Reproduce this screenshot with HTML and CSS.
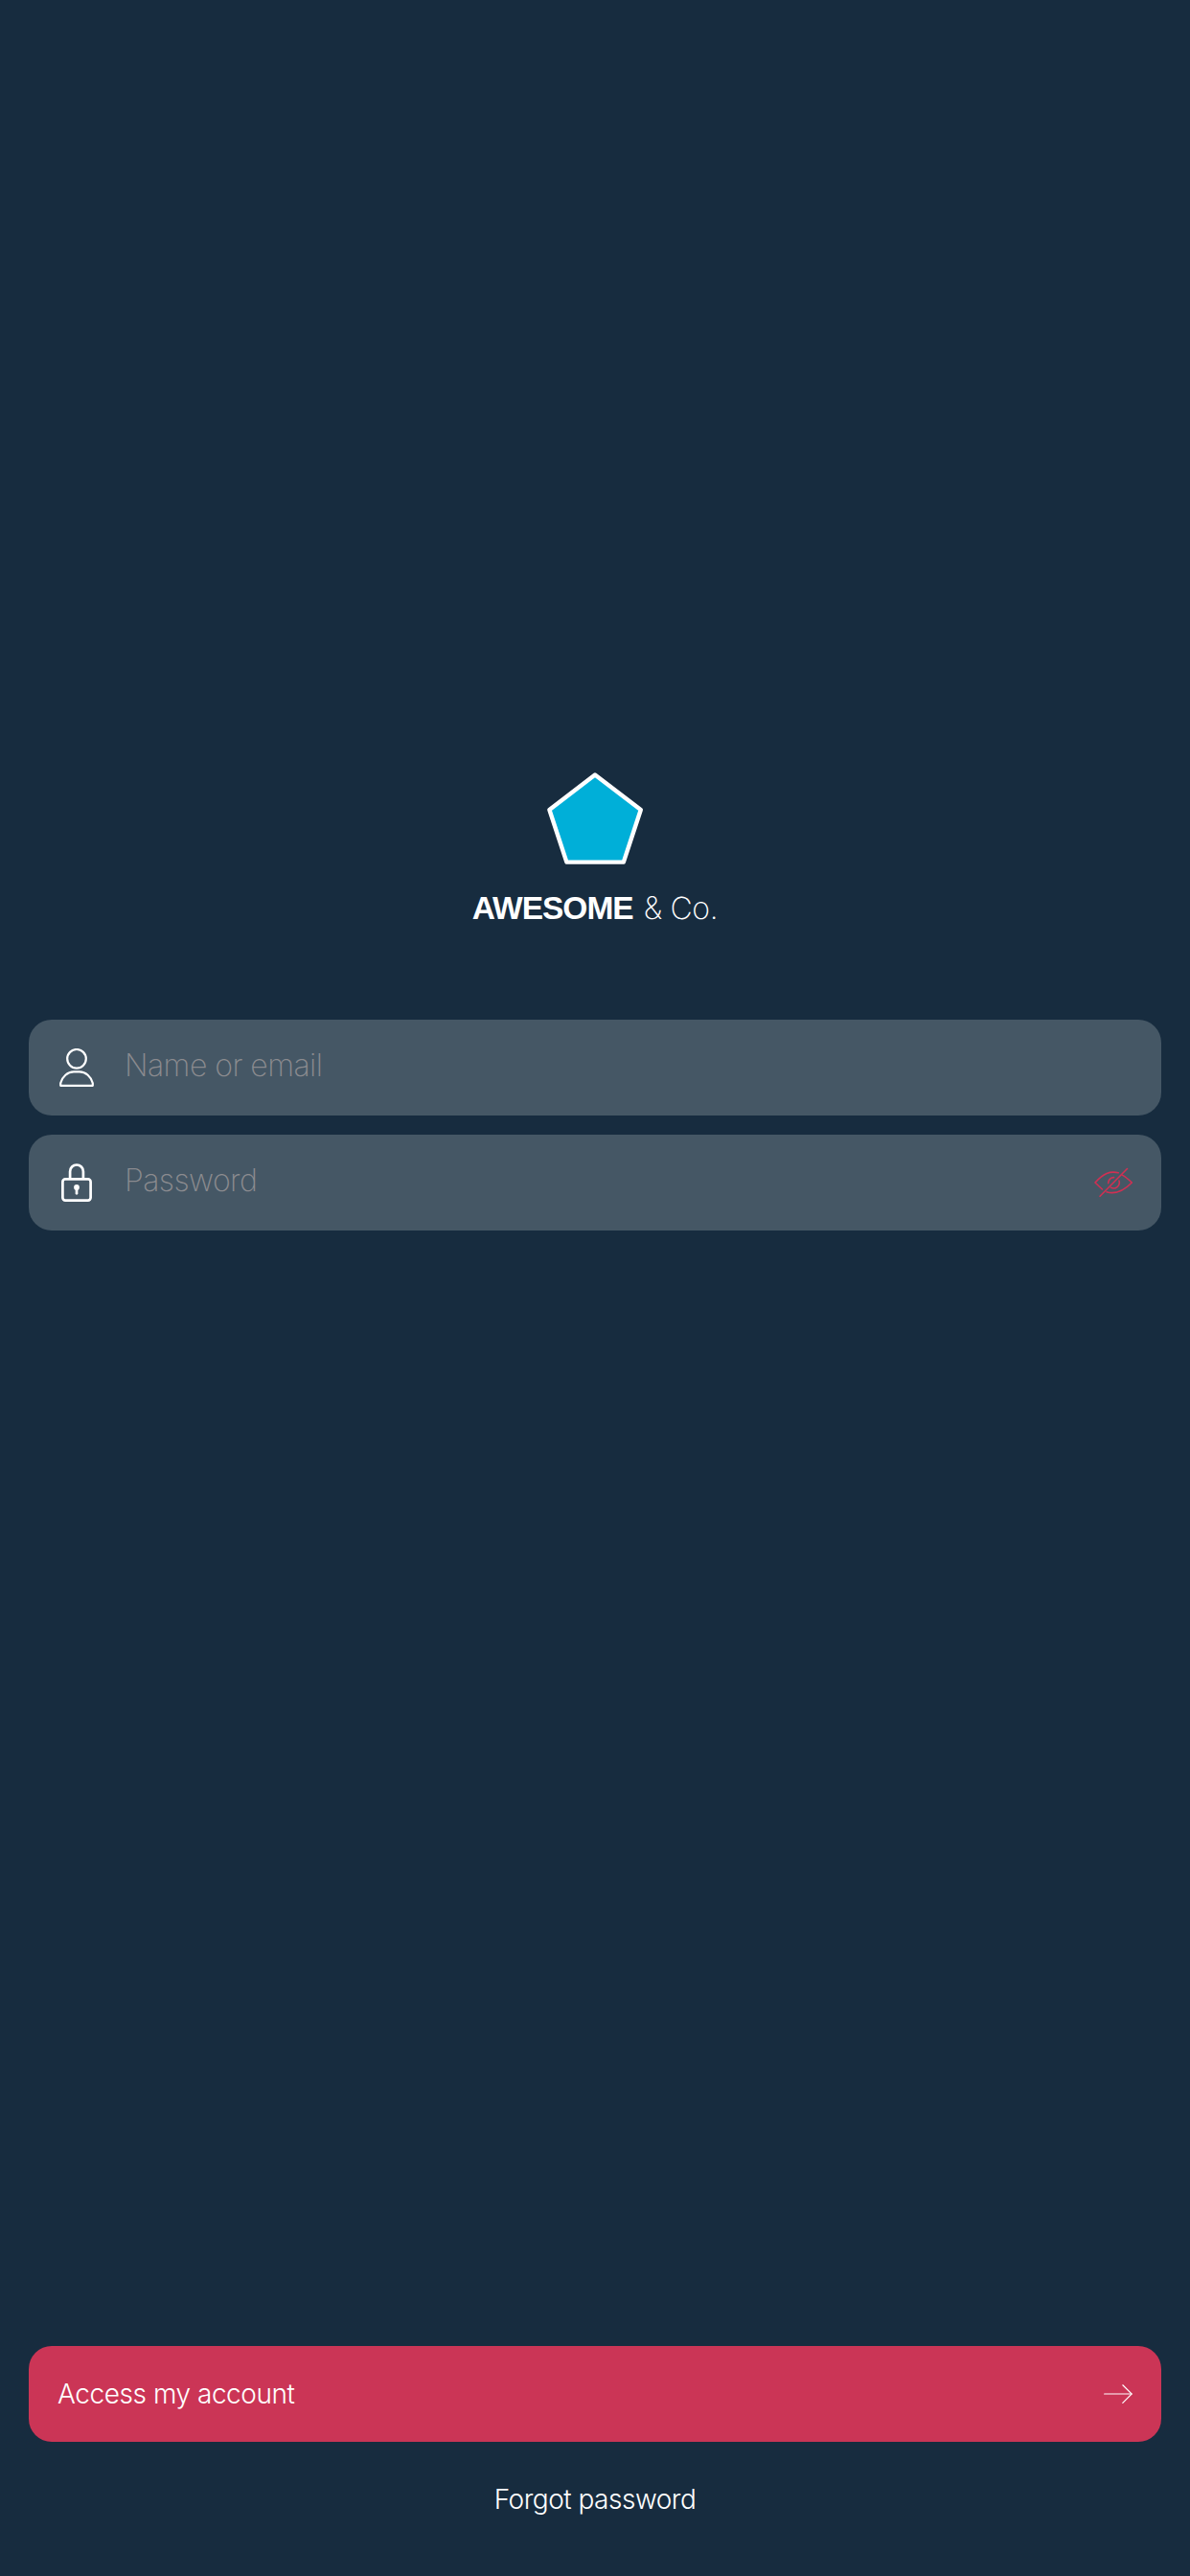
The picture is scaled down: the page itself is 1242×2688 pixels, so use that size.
FILE: index.html
```html
<!DOCTYPE html>
<html lang="en">
<head>
<meta charset="utf-8">
<title>Awesome &amp; Co.</title>
<link rel="stylesheet" href="styles.css">
</head>
<body>
<main class="screen">
  <header class="brand">
    <svg class="brand-mark" viewBox="0 0 104 102" fill="#00afd8" stroke="#fff" stroke-width="4.4" stroke-linejoin="round">
      <path d="M52 8.5 99.8 45 81.8 99.6H22.4L4.4 45Z"/>
    </svg>
    <h1 class="brand-name"><span class="brand-bold">AWESOME</span><span class="brand-light">&amp; Co.</span></h1>
  </header>
  <form class="login">
    <label class="field">
      <svg class="icon" viewBox="0 0 40 40" fill="none" stroke="#fff" stroke-width="2.2" stroke-linejoin="round">
        <circle cx="20" cy="10.8" r="9.8"/>
        <path d="M3.2 38.8V36.2C5 29.4 10.6 24.4 17 24.4H23C29.4 24.4 35 29.4 36.8 36.2V38.8Z"/>
      </svg>
      <span class="placeholder">Name or email</span>
    </label>
    <label class="field">
      <svg class="icon" viewBox="0 0 40 40" fill="none" stroke="#fff" stroke-width="2.7">
        <rect x="5.4" y="16.4" width="29.2" height="22.2" rx="2.8"/>
        <path d="M13.1 16V8.4a6.9 6.9 0 0 1 13.8 0V16"/>
        <circle cx="20" cy="25" r="2.9" fill="#fff" stroke="none"/>
        <path d="M20 25V31.3" stroke-linecap="round"/>
      </svg>
      <span class="placeholder">Password</span>
      <svg class="icon" viewBox="0 0 40 40" fill="none" stroke="#d03053" stroke-width="1.6" stroke-linecap="round" stroke-linejoin="round">
        <path d="M34.5 5.5 6 34.2"/>
        <path d="M25.2 9.8C16.5 7.6 9.6 10.5 1 20L8.4 27"/>
        <path d="M29.2 12.1Q33.5 14.3 39.3 20C30.5 29 22.2 32.6 13 29.8"/>
        <path d="M14.7 20.6A5.8 5.8 0 0 1 20.6 14.6M26 18.1A6 6 0 0 1 17.3 25.1"/>
      </svg>
    </label>
  </form>
  <footer class="actions">
    <button class="submit" type="button">
      <span>Access my account</span>
      <svg class="arrow" viewBox="0 0 30 24" fill="none" stroke="#fff" stroke-width="1.2" stroke-linecap="round">
        <path d="M.6 12H29" stroke-width="1.1"/>
        <path d="M19.8 2.8 29.2 12 19.8 21.4"/>
      </svg>
    </button>
    <a class="forgot">Forgot password</a>
  </footer>
</main>
</body>
</html>
```
FILE: styles.css
```css
body {
  margin: 0;
  background: #172c3f;
  color: #fff;
  font-family: Inter, "Liberation Sans", sans-serif;
  font-weight: 300;
}
.screen {
  box-sizing: border-box;
  height: 2688px;
  padding: 800px 30px 0;
  display: flex;
  flex-direction: column;
}
.brand {
  height: 264px;
  display: flex;
  flex-direction: column;
  align-items: center;
}
.brand-mark {
  width: 104px;
  height: 102px;
}
.brand-name {
  display: flex;
  align-items: baseline;
  gap: 11px;
  margin: 26px 0 0;
  font-size: 32px;
  line-height: 40px;
  font-weight: 300;
  white-space: nowrap;
}
.brand-bold {
  font-family: "Liberation Sans", sans-serif;
  font-size: 33.5px;
  font-weight: 700;
  letter-spacing: -1px;
}
.brand-light {
  font-weight: 250;
  letter-spacing: -0.3px;
}
.login {
  display: flex;
  flex-direction: column;
  gap: 20px;
}
.field {
  box-sizing: border-box;
  height: 100px;
  padding: 0 30px;
  display: flex;
  align-items: center;
  border-radius: 24px;
  background: #455765;
}
.icon {
  width: 40px;
  height: 40px;
  flex: none;
}
.placeholder {
  flex: 1;
  margin-left: 30px;
  color: #8b8b8f;
  font-size: 32px;
  font-weight: 250;
  letter-spacing: -0.55px;
  line-height: 40px;
  padding-bottom: 4px;
}
.actions {
  margin-top: auto;
  height: 240px;
  display: flex;
  flex-direction: column;
  align-items: center;
}
.submit {
  width: 100%;
  height: 100px;
  padding: 0 30px;
  display: flex;
  align-items: center;
  justify-content: space-between;
  border: 0;
  border-radius: 24px;
  background: #cb3556;
  color: #fff;
  font: 300 28px/40px Inter, sans-serif;
  letter-spacing: -0.45px;
}
.arrow {
  width: 30px;
  height: 24px;
}
.forgot {
  margin-top: 40px;
  font-size: 28px;
  line-height: 40px;
  letter-spacing: -0.5px;
}
```
